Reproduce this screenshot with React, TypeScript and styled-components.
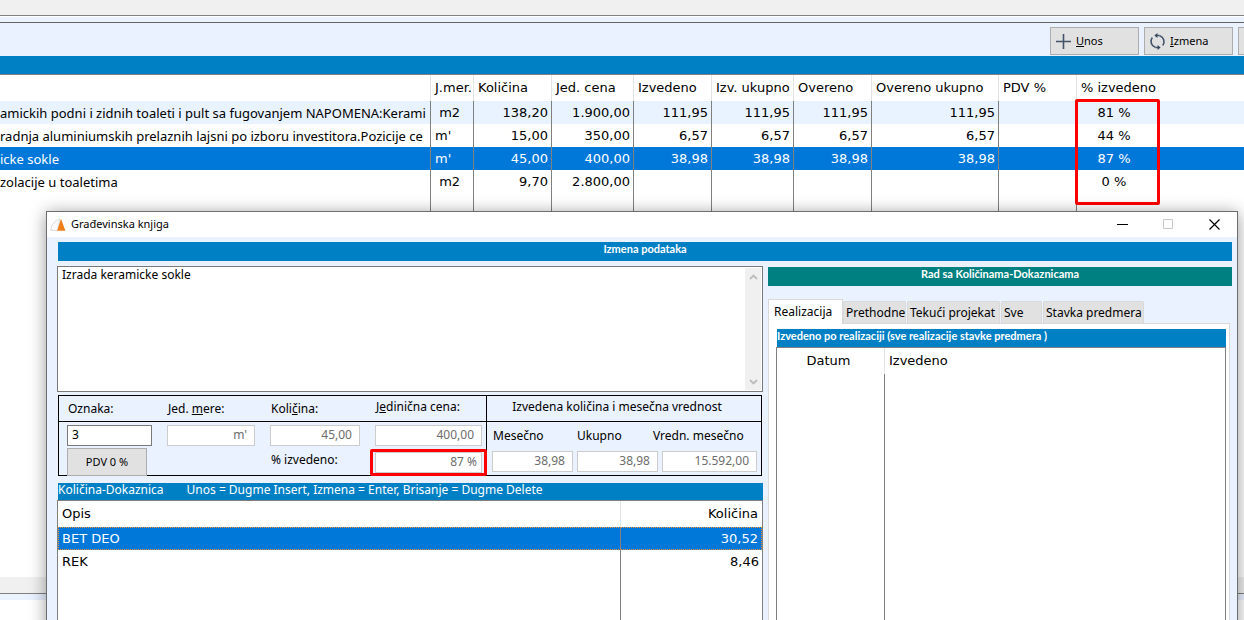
import React from 'react';
import styled, { createGlobalStyle, css } from 'styled-components';

const ui = '"Noto Sans", "Open Sans", sans-serif';
const grid = '"DejaVu Sans", Verdana, sans-serif';
const heading = 'Lato, "Open Sans", sans-serif';

const c = {
  panel: '#eaf1ff',
  bar: '#0080c4',
  teal: '#008080',
  select: '#0078d9',
  line: '#808080',
  soft: '#e3e3e3',
  face: '#e1e1e1',
  stripe: '#e9f3ff',
  mark: '#ff0000',
};

const Global = createGlobalStyle`
  * { box-sizing: border-box; }
  body { margin: 0; background: #fff; color: #000; font-family: ${ui}; font-size: 12px; }
  button, input, textarea { font-family: inherit; color: inherit; margin: 0; border-radius: 0; }
`;

const Desktop = styled.div`
  position: relative;
  display: flex;
  flex-direction: column;
  height: 100vh;
  overflow: hidden;
`;

const TopStrip = styled.div`
  flex: none;
  height: 16px;
  background: #f0f0f0;
  border-bottom: 1px solid ${c.line};
`;

const Seam = styled.div`
  flex: none;
  height: 7px;
  background: ${c.panel};
  border-top: 1px solid #fff;
  border-bottom: 1px solid #646464;
`;

const Toolbar = styled.div`
  flex: none;
  display: flex;
  justify-content: flex-end;
  gap: 5px;
  height: 33px;
  padding-top: 4px;
  background: ${c.panel};
`;

const ToolButton = styled.button<{ $cut?: boolean }>`
  flex: none;
  display: flex;
  align-items: center;
  gap: 4px;
  width: 89px;
  height: 28px;
  padding: 0 4px;
  margin-right: ${p => (p.$cut ? '-83px' : '0')};
  background: ${c.face};
  border: 1px solid #adadad;
  font-size: 11px;
  svg { flex: none; }
  span { padding-bottom: 2px; }
`;

const BlueStrip = styled.div`
  flex: none;
  height: 19px;
  background: ${c.bar};
  border-bottom: 1px solid ${c.line};
`;

const TableArea = styled.div`
  flex: none;
  height: 502px;
  overflow: hidden;
`;

const DataTable = styled.table`
  width: 100%;
  height: 100%;
  table-layout: fixed;
  border-collapse: separate;
  border-spacing: 0;
  font-family: ${grid};
  font-size: 13px;
  line-height: 22px;
`;

const Th = styled.th<{ $align?: string; $last?: boolean }>`
  position: relative;
  height: 26px;
  padding: ${p => (p.$align === 'center' ? '0 6px 0 2px' : '0 4px')};
  font-weight: 400;
  text-align: ${p => p.$align || 'left'};
  white-space: nowrap;
  border-right: ${p => (p.$last ? 'none' : `1px solid ${c.soft}`)};
`;

const Td = styled.td<{ $align?: string; $last?: boolean }>`
  padding: ${p => (p.$align === 'center' ? '0 6px 0 2px' : '0 3px 0 4px')};
  height: 23px;
  overflow: hidden;
  white-space: pre;
  text-align: ${p => p.$align || 'left'};
  border-right: ${p => (p.$last ? 'none' : `1px solid ${c.line}`)};
`;

const DescriptionTd = styled(Td)`
  padding: 0;
  font-family: ${ui};
`;

const Tr = styled.tr<{ $tone?: 'stripe' | 'selected' }>`
  ${p => p.$tone === 'stripe' && css`background: ${c.stripe};`}
  ${p => p.$tone === 'selected' && css`background: ${c.select}; color: #fff;`}
`;

const FocusTr = styled(Tr)`
  td { border-top: 1px dotted #f0913c; border-bottom: 1px dotted #f0913c; line-height: 20px; }
  td:first-child { border-left: 1px dotted #f0913c; padding-left: 3px; }
  td:last-child { border-right: 1px dotted #f0913c; }
`;

const PercentMark = styled.span`
  position: absolute;
  z-index: 1;
  left: -2px;
  top: 24px;
  width: 85px;
  height: 106px;
  border: 3px solid ${c.mark};
  border-radius: 2px;
`;

const ScrollTrack = styled.div`
  flex: none;
  height: 17px;
  background: #f0f0f0;
  border-bottom: 1px solid ${c.line};
`;

const BottomSeam = styled.div`
  flex: none;
  height: 6px;
  background: ${c.panel};
`;

const Dialog = styled.section`
  position: absolute;
  z-index: 2;
  left: 46px;
  right: 6px;
  top: 211px;
  bottom: -20px;
  display: flex;
  flex-direction: column;
  background: ${c.panel};
  border: 1px solid #6e6e6e;
  box-shadow: 0 2px 16px rgba(0, 0, 0, 0.4);
`;

const TitleBar = styled.header`
  flex: none;
  display: flex;
  align-items: center;
  height: 25px;
  padding-left: 3px;
  background: #fff;
`;

const Title = styled.h1`
  flex: 1;
  margin: 0 0 0 5px;
  padding-bottom: 2px;
  font-size: 11px;
  font-weight: 400;
`;

const WindowButton = styled.button`
  width: 46px;
  height: 25px;
  padding: 0;
  border: 0;
  background: none;
  display: grid;
  place-items: center;
`;

const Body = styled.div`
  flex: 1;
  min-height: 0;
  display: flex;
  flex-direction: column;
  gap: 5px;
  padding: 5px 5px 0 10px;
`;

const HeadBar = styled.h2<{ $tone?: string; $indent?: boolean; $align?: string; $h?: number }>`
  flex: none;
  height: ${p => p.$h || 19}px;
  margin: 0 0 0 ${p => (p.$indent ? 1 : 0)}px;
  background: ${p => p.$tone || c.bar};
  color: #fff;
  font-family: ${heading};
  font-size: 11px;
  font-weight: 700;
  line-height: 14px;
  text-align: ${p => p.$align || 'center'};
  white-space: nowrap;
`;

const Columns = styled.div`
  flex: 1;
  min-height: 0;
  display: grid;
  grid-template-columns: minmax(0, 706fr) minmax(0, 464fr);
  column-gap: 5px;
`;

const Column = styled.div<{ $drop?: boolean }>`
  display: flex;
  flex-direction: column;
  min-height: 0;
  padding-top: ${p => (p.$drop ? '1px' : '0')};
`;

const MemoBox = styled.div`
  flex: none;
  display: flex;
  height: 126px;
  background: #fff;
  border: 1px solid #7a7a7a;
`;

const Memo = styled.textarea`
  flex: 1;
  resize: none;
  border: 0;
  outline: 0;
  padding: 0 4px;
  overflow: hidden;
  font-size: 12px;
  line-height: 16px;
`;

const MemoScroll = styled.div`
  display: flex;
  flex-direction: column;
  justify-content: space-between;
  width: 16px;
  margin: 1px;
  background: #f0f0f0;
`;

const ArrowButton = styled.button`
  height: 17px;
  padding: 0;
  border: 0;
  background: none;
  display: grid;
  place-items: center;
`;

const Form = styled.div`
  flex: none;
  display: flex;
  height: 81px;
  margin: 3px 1px 0 1px;
  border: 1px solid #000;
`;

const FormLeft = styled.div`
  flex: none;
  width: 428px;
  border-right: 1px solid #000;
`;

const FormRight = styled.div`
  flex: 1;
  min-width: 0;
`;

const Row = styled.div<{ $h: number; $rule?: boolean }>`
  display: grid;
  grid-template-columns: 85px 88px 90px 107px;
  column-gap: 15px;
  align-items: center;
  height: ${p => p.$h}px;
  padding-left: 8px;
  border-bottom: ${p => (p.$rule ? '1px solid #000' : 'none')};
`;

const TotalsRow = styled(Row)`
  grid-template-columns: 81px 81px minmax(0, 1fr);
  column-gap: 4px;
  padding: 0 4px 0 5px;
`;

const TotalsLabels = styled(TotalsRow)`
  grid-template-columns: 80px 72px minmax(0, 1fr);
`;

const GroupTitle = styled.div`
  height: 26px;
  padding-right: 14px;
  line-height: 21px;
  text-align: center;
  white-space: nowrap;
  border-bottom: 1px solid #000;
`;

const Label = styled.label<{ $raise?: boolean }>`
  padding-left: 1px;
  line-height: 16px;
  padding-bottom: ${p => (p.$raise ? '4px' : '0')};
  white-space: nowrap;
`;

const Field = styled.input<{ $active?: boolean }>`
  width: 100%;
  min-width: 0;
  height: 21px;
  padding: 0 7px 1px 4px;
  background: #fff;
  border: 1px solid ${p => (p.$active ? '#7a7a7a' : '#cccccc')};
  color: ${p => (p.$active ? '#000' : '#6d6d6d')};
  font-size: 12px;
  text-align: ${p => (p.$active ? 'left' : 'right')};
  outline: 0;
`;

const MarkedCell = styled.div`
  position: relative;
  &::after {
    content: '';
    position: absolute;
    left: -5px;
    right: -5px;
    top: -3px;
    bottom: -3px;
    border: 3px solid ${c.mark};
    border-radius: 2px;
    pointer-events: none;
  }
  input { display: block; padding-right: 4px; }
`;

const PdvButton = styled.button`
  width: 80px;
  height: 28px;
  padding: 0 0 2px;
  background: ${c.face};
  border: 1px solid #adadad;
  font-size: 11px;
`;

const HintBar = styled.div`
  flex: none;
  display: flex;
  gap: 23px;
  height: 17px;
  margin: 7px 0 0 1px;
  background: ${c.bar};
  color: #fff;
  font-size: 12px;
  line-height: 14px;
  white-space: nowrap;
`;

const GridBox = styled.div`
  flex: 1;
  min-height: 0;
  border: 1px solid ${c.line};
  background: #fff;
`;

const Tabs = styled.div`
  flex: none;
  display: flex;
  align-items: flex-end;
  height: 24px;
  margin-top: 13px;
`;

const Tab = styled.button<{ $w: number; $active?: boolean }>`
  width: ${p => p.$w}px;
  height: ${p => (p.$active ? 25 : 22)}px;
  margin-right: ${p => (p.$active ? 0 : 1)}px;
  margin-bottom: ${p => (p.$active ? '-1px' : '0')};
  padding: 0 0 ${p => (p.$active ? 2 : 0)}px ${p => (p.$active ? 5 : 2)}px;
  position: relative;
  background: ${p => (p.$active ? '#fff' : c.face)};
  border: 1px solid #d9d9d9;
  border-bottom: 0;
  border-radius: ${p => (p.$active ? '0' : '2px 2px 0 0')};
  font-size: 12px;
  text-align: left;
  white-space: nowrap;
`;

const TabPanel = styled.div`
  flex: 1;
  min-height: 0;
  display: flex;
  flex-direction: column;
  margin-right: 2px;
  padding: 5px 3px 0 7px;
  background: #fff;
  border: 1px solid #d9d9d9;
`;

const PlusIcon = () => (
  <svg width="17" height="17" viewBox="0 0 17 17" fill="none" stroke="#44546a" strokeWidth="1.6" aria-hidden="true">
    <path d="M8.5 1v15M1 8.5h15" />
  </svg>
);

const CycleIcon = () => (
  <svg width="17" height="17" viewBox="0 0 17 17" fill="none" stroke="#44546a" strokeWidth="1.6" aria-hidden="true">
    <path d="M6.300 14.300A6.200 6.200 0 0 1 3.300 4.600M10.700 2.700a6.200 6.200 0 0 1 3 9.700" />
    <path d="M7 2.500h3.700M6.300 14.500H10" />
    <path d="M8.400 0 5.400 2.500l3 2.500zM8.600 12l3 2.500-3 2.500z" fill="#34455a" stroke="none" />
  </svg>
);

const Logo = () => (
  <svg width="16" height="14" viewBox="0 0 16 14" aria-hidden="true">
    <path d="M.7 12.4C1.2 7 4.500 2.200 10 1L7.500 12.600z" fill="#fafafa" stroke="#dcdcdc" />
    <path d="M11 .8 15.400 12.700H7.200z" fill="#ee7f1a" />
  </svg>
);

const Chevron = ({ down }: { down?: boolean }) => (
  <svg width="9" height="6" viewBox="0 0 9 6" fill="none" stroke="#bcbcbc" strokeWidth="1.800" aria-hidden="true">
    <path d={down ? 'M1 1l3.500 3.500L8 1' : 'M1 5l3.500-3.500L8 5'} />
  </svg>
);

const columns = [
  { name: '', w: 431 },
  { name: 'J.mer.', w: 43 },
  { name: 'Količina', w: 78 },
  { name: 'Jed. cena', w: 82 },
  { name: 'Izvedeno', w: 78 },
  { name: 'Izv. ukupno', w: 82 },
  { name: 'Overeno', w: 78 },
  { name: 'Overeno ukupno', w: 127 },
  { name: 'PDV %', w: 78 },
];

const rows: { tone?: 'stripe' | 'selected'; text: string; cells: string[]; pct: string }[] = [
  {
    tone: 'stripe',
    text: 'amickih podni i zidnih toaleti i pult sa fugovanjem NAPOMENA:Kerami',
    cells: [' m2', '138,20', '1.900,00', '111,95', '111,95', '111,95', '111,95', ''],
    pct: '81 %',
  },
  {
    text: 'radnja aluminiumskih prelaznih lajsni po izboru investitora.Pozicije ce',
    cells: ["m'", '15,00', '350,00', '6,57', '6,57', '6,57', '6,57', ''],
    pct: '44 %',
  },
  {
    tone: 'selected',
    text: 'icke sokle',
    cells: ["m'", '45,00', '400,00', '38,98', '38,98', '38,98', '38,98', ''],
    pct: '87 %',
  },
  { text: 'zolacije u toaletima', cells: [' m2', '9,70', '2.800,00', '', '', '', '', ''], pct: '0 %' },
];

const tabs = [
  { name: 'Realizacija', w: 75 },
  { name: 'Prethodne', w: 63 },
  { name: 'Tekući projekat', w: 93 },
  { name: 'Sve', w: 41 },
  { name: 'Stavka predmera', w: 101 },
];

function ItemsTable() {
  return (
    <TableArea>
      <DataTable>
        <colgroup>
          {columns.map((col, i) => <col key={i} width={col.w} />)}
          <col width={78} />
          <col />
        </colgroup>
        <thead>
          <tr>
            {columns.map((col, i) => <Th key={i}>{col.name}</Th>)}
            <Th $last>% izvedeno<PercentMark /></Th>
            <Th $last />
          </tr>
        </thead>
        <tbody>
          {rows.map(row => (
            <Tr key={row.text} $tone={row.tone}>
              <DescriptionTd>{row.text}</DescriptionTd>
              {row.cells.map((cell, i) => <Td key={i} $align={i === 0 ? 'left' : 'right'}>{cell}</Td>)}
              <Td $align="center" $last>{row.pct}</Td>
              <Td $last />
            </Tr>
          ))}
          <tr style={{ height: '100%' }}>
            {columns.map((_, i) => <Td key={i} />)}
            <Td $last />
            <Td $last />
          </tr>
        </tbody>
      </DataTable>
    </TableArea>
  );
}

function EntryForm() {
  return (
    <Form>
      <FormLeft>
        <Row $h={26} $rule>
          <Label htmlFor="oznaka">Oznaka:</Label>
          <Label htmlFor="mera">Jed. <u>m</u>ere:</Label>
          <Label htmlFor="kolicina">Koli<u>č</u>ina:</Label>
          <Label htmlFor="cena" $raise>J<u>e</u>dinična cena:</Label>
        </Row>
        <Row $h={26}>
          <Field id="oznaka" $active defaultValue="3" />
          <Field id="mera" readOnly value="m'" />
          <Field id="kolicina" readOnly value="45,00" />
          <Field id="cena" readOnly value="400,00" />
        </Row>
        <Row $h={27}>
          <PdvButton type="button">PDV 0 %</PdvButton>
          <span />
          <Label htmlFor="procenat" $raise>% izvedeno:</Label>
          <MarkedCell><Field id="procenat" readOnly value="87 %" /></MarkedCell>
        </Row>
      </FormLeft>
      <FormRight>
        <GroupTitle>Izvedena količina i mesečna vrednost</GroupTitle>
        <TotalsLabels $h={28}>
          <Label htmlFor="mesecno">Mesečno</Label>
          <Label htmlFor="ukupno">Ukupno</Label>
          <Label htmlFor="vrednost">Vredn. mesečno</Label>
        </TotalsLabels>
        <TotalsRow $h={22}>
          <Field id="mesecno" readOnly value="38,98" />
          <Field id="ukupno" readOnly value="38,98" />
          <Field id="vrednost" readOnly value="15.592,00" />
        </TotalsRow>
      </FormRight>
    </Form>
  );
}

function QuantityGrid() {
  return (
    <GridBox>
      <DataTable>
        <colgroup>
          <col />
          <col width={141} />
        </colgroup>
        <thead>
          <tr>
            <Th>Opis</Th>
            <Th $last $align="right">Količina</Th>
          </tr>
        </thead>
        <tbody>
          <FocusTr $tone="selected">
            <Td>BET DEO</Td>
            <Td $last $align="right">30,52</Td>
          </FocusTr>
          <Tr>
            <Td>REK</Td>
            <Td $last $align="right">8,46</Td>
          </Tr>
          <tr style={{ height: '100%' }}>
            <Td />
            <Td $last />
          </tr>
        </tbody>
      </DataTable>
    </GridBox>
  );
}

function RealizationGrid() {
  return (
    <GridBox>
      <DataTable>
        <colgroup>
          <col width={108} />
          <col />
        </colgroup>
        <thead>
          <tr>
            <Th $align="center">Datum</Th>
            <Th $last>Izvedeno</Th>
          </tr>
        </thead>
        <tbody>
          <tr style={{ height: '100%' }}>
            <Td />
            <Td $last />
          </tr>
        </tbody>
      </DataTable>
    </GridBox>
  );
}

export default function App() {
  return (
    <>
      <Global />
      <Desktop>
        <TopStrip />
        <Seam />
        <Toolbar>
          <ToolButton type="button"><PlusIcon /><span><u>U</u>nos</span></ToolButton>
          <ToolButton type="button"><CycleIcon /><span><u>I</u>zmena</span></ToolButton>
          <ToolButton type="button" $cut aria-label="Brisanje" />
        </Toolbar>
        <BlueStrip />
        <ItemsTable />
        <ScrollTrack />
        <BottomSeam />

        <Dialog role="dialog" aria-labelledby="dialog-title">
          <TitleBar>
            <Logo />
            <Title id="dialog-title">Građevinska knjiga</Title>
            <WindowButton type="button" aria-label="Minimize">
              <svg width="11" height="11" stroke="#000"><path d="M0 5.500h11" /></svg>
            </WindowButton>
            <WindowButton type="button" aria-label="Maximize">
              <svg width="11" height="11" fill="none" stroke="#c8c8c8"><path d="M.5.5h9v9h-9z" /></svg>
            </WindowButton>
            <WindowButton type="button" aria-label="Close">
              <svg width="11" height="11" stroke="#000" strokeWidth="1.200"><path d="M.5.500l10 10M10.500.5l-10 10" /></svg>
            </WindowButton>
          </TitleBar>
          <Body>
            <HeadBar $indent>Izmena podataka</HeadBar>
            <Columns>
              <Column>
                <MemoBox>
                  <Memo aria-label="Opis stavke" defaultValue="Izrada keramicke sokle" />
                  <MemoScroll>
                    <ArrowButton type="button" aria-label="Up"><Chevron /></ArrowButton>
                    <ArrowButton type="button" aria-label="Down"><Chevron down /></ArrowButton>
                  </MemoScroll>
                </MemoBox>
                <EntryForm />
                <HintBar>
                  <span>Količina-Dokaznica</span>
                  <span>Unos = Dugme Insert, Izmena = Enter, Brisanje = Dugme Delete</span>
                </HintBar>
                <QuantityGrid />
              </Column>
              <Column $drop>
                <HeadBar $tone={c.teal}>Rad sa Količinama-Dokaznicama</HeadBar>
                <Tabs role="tablist">
                  {tabs.map((tab, i) => (
                    <Tab key={tab.name} type="button" role="tab" aria-selected={i === 0} $active={i === 0} $w={tab.w}>
                      {tab.name}
                    </Tab>
                  ))}
                </Tabs>
                <TabPanel role="tabpanel">
                  <HeadBar $indent $align="left" $h={18}>
                    Izvedeno po realizaciji (sve realizacije stavke predmera )
                  </HeadBar>
                  <RealizationGrid />
                </TabPanel>
              </Column>
            </Columns>
          </Body>
        </Dialog>
      </Desktop>
    </>
  );
}
